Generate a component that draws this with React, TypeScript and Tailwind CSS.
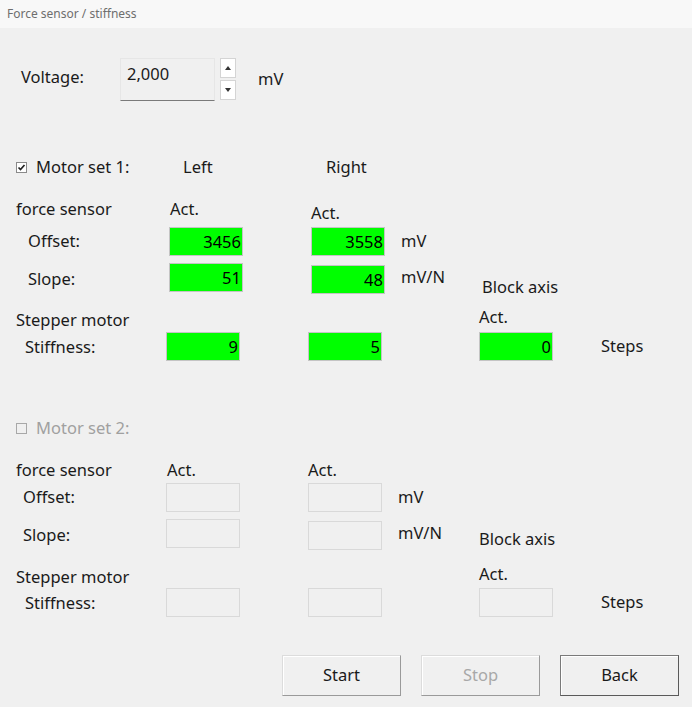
import React from "react";

type Cell = { value?: string };

const Box: React.FC<{ value?: string; active: boolean; className?: string }> = ({
  value,
  active,
  className = "",
}) => (
  <div
    className={`h-[29px] w-[74px] shrink-0 border text-right text-[16.5px] leading-[27px] pr-[1px] ${
      active ? "bg-[#00ff00] border-[#c4c4c4] text-black" : "bg-[#f0f0f0] border-[#d9d9d9]"
    } ${className}`}
  >
    {value}
  </div>
);

const Check: React.FC<{ checked: boolean }> = ({ checked }) => (
  <span
    className={`mr-[9px] flex h-[11px] w-[11px] items-center justify-center border ${
      checked ? "border-[#8a8a8a] bg-white" : "border-[#a8a8a8] bg-[#f0f0f0]"
    }`}
  >
    {checked && (
      <svg width="9" height="9" viewBox="0 0 9 9">
        <path d="M1.5 4.5 L3.5 6.5 L7.5 2" stroke="#222" strokeWidth="1.7" fill="none" />
      </svg>
    )}
  </span>
);

interface SetProps {
  title: string;
  active: boolean;
  offset: Cell[];
  slope: Cell[];
  stiff: string[];
  second?: boolean;
}

const MotorSet: React.FC<SetProps> = ({ title, active, offset, slope, stiff, second }) => (
  <div className="flex flex-col">
    <div className={`flex h-[20px] items-center pl-[16px] ${active ? "text-[#1a1a1a]" : "text-[#a0a0a0]"}`}>
      <Check checked={active} />
      <span className="w-[147px]">{title}</span>
      {!second && (
        <>
          <span className="w-[143px]">Left</span>
          <span>Right</span>
        </>
      )}
    </div>

    <div className="mt-[21px] flex h-[22px] items-center pl-[16px]">
      <span className={second ? "w-[151px]" : "w-[154px]"}>force sensor</span>
      <span className="w-[141px]">Act.</span>
      <span className={second ? "" : "mt-[9px]"}>Act.</span>
    </div>

    <div className={`flex items-start ${second ? "mt-[2px] pl-[23px]" : "mt-[7px] pl-[28px]"}`}>
      <span className={`h-[29px] leading-[27px] ${second ? "w-[143px]" : "w-[141px]"}`}>Offset:</span>
      <Box value={offset[0].value} active={active} />
      <Box value={offset[1].value} active={active} className="ml-[68px]" />
      <span className="ml-[16px] leading-[27px]">mV</span>
    </div>

    <div className={`flex h-[29px] items-start ${second ? "mt-[7px] pl-[23px]" : "mt-[7px] pl-[28px]"}`}>
      <span className={`h-[29px] leading-[31px] ${second ? "w-[143px]" : "w-[141px]"}`}>Slope:</span>
      <Box value={slope[0].value} active={active} />
      <Box value={slope[1].value} active={active} className="ml-[68px] mt-[2px]" />
      <span className="ml-[16px] w-[81px] leading-[27px]">mV/N</span>
      <span className={second ? "mt-[6px] leading-[27px]" : "mt-[10px] leading-[27px]"}>Block axis</span>
    </div>

    <div className={`flex h-[22px] items-center pl-[16px] ${second ? "mt-[18px]" : "mt-[17px]"}`}>
      <span className="w-[463px]">Stepper motor</span>
      <span className="-mt-[6px]">Act.</span>
    </div>

    <div className={`flex items-start pl-[25px] ${second ? "mt-0" : "mt-[1px]"}`}>
      <span className="h-[29px] w-[141px] leading-[29px]">Stiffness:</span>
      <Box value={stiff[0]} active={active} />
      <Box value={stiff[1]} active={active} className="ml-[68px]" />
      <Box value={stiff[2]} active={active} className="ml-[97px]" />
      <span className="ml-[48px] leading-[27px]">Steps</span>
    </div>
  </div>
);

const Button: React.FC<{ label: string; disabled?: boolean; primary?: boolean }> = ({
  label,
  disabled,
  primary,
}) => (
  <button
    type="button"
    className={`h-[41px] w-[119px] text-[16.5px] bg-[#f0f0f0] shadow-[inset_1px_1px_0_#ffffff] ${
      primary
        ? "border border-[#7a7a7a] border-b-[#5a5a5a] border-r-[#5a5a5a]"
        : "border border-[#dcdcdc] border-b-[#9a9a9a] border-r-[#9a9a9a]"
    } ${disabled ? "text-[#a8a8a8]" : "text-[#1a1a1a]"}`}
  >
    {label}
  </button>
);

export default function App() {
  return (
    <div
      className="h-[707px] w-[692px] overflow-hidden bg-[#f0f0f0] text-[16.5px] text-[#1a1a1a]"
      style={{ fontFamily: '"Noto Sans", "Open Sans", sans-serif' }}
    >
      <div className="h-[28px] bg-[#f8f8f8] pl-[7px] text-[12px] leading-[27px] text-[#6e6e6e]">
        Force sensor / stiffness
      </div>

      <div className="mt-[30px] flex items-start pl-[21px]">
        <span className="mt-[7px] w-[99px]">Voltage:</span>
        <div className="h-[43px] w-[95px] border border-[#e6e6e6] border-b-[#7a7a7a] bg-[#f0f0f0] pl-[6px] pt-[3px]">
          2,000
        </div>
        <div className="ml-[5px] flex flex-col gap-[2px]">
          <div className="flex h-[20px] w-[16px] items-center justify-center border border-[#d4d4d4] bg-white">
            <svg width="6" height="4" viewBox="0 0 6 4">
              <path d="M0 4 L3 0 L6 4 Z" fill="#333" />
            </svg>
          </div>
          <div className="flex h-[20px] w-[16px] items-center justify-center border border-[#d4d4d4] bg-white">
            <svg width="6" height="4" viewBox="0 0 6 4">
              <path d="M0 0 L3 4 L6 0 Z" fill="#333" />
            </svg>
          </div>
        </div>
        <span className="ml-[22px] mt-[9px]">mV</span>
      </div>

      <div className="mt-[56px]">
        <MotorSet
          title="Motor set 1:"
          active
          offset={[{ value: "3456" }, { value: "3558" }]}
          slope={[{ value: "51" }, { value: "48" }]}
          stiff={["9", "5", "0"]}
        />
      </div>

      <div className="mt-[57px]">
        <MotorSet
          title="Motor set 2:"
          active={false}
          second
          offset={[{}, {}]}
          slope={[{}, {}]}
          stiff={["", "", ""]}
        />
      </div>

      <div className="mt-[38px] flex justify-end gap-[20px] pr-[13px]">
        <Button label="Start" />
        <Button label="Stop" disabled />
        <Button label="Back" primary />
      </div>
    </div>
  );
}
